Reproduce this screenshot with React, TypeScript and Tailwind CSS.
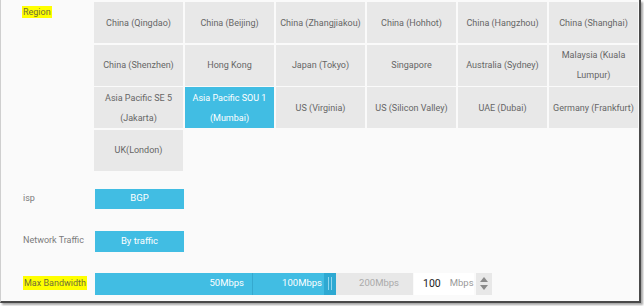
import React from 'react';

const regions = [
  'China (Qingdao)',
  'China (Beijing)',
  'China (Zhangjiakou)',
  'China (Hohhot)',
  'China (Hangzhou)',
  'China (Shanghai)',
  'China (Shenzhen)',
  'Hong Kong',
  'Japan (Tokyo)',
  'Singapore',
  'Australia (Sydney)',
  'Malaysia (Kuala Lumpur)',
  'Asia Pacific SE 5 (Jakarta)',
  'Asia Pacific SOU 1 (Mumbai)',
  'US (Virginia)',
  'US (Silicon Valley)',
  'UAE (Dubai)',
  'Germany (Frankfurt)',
  'UK(London)',
];

const selected = 'Asia Pacific SOU 1 (Mumbai)';

function Label({ children, mark }: { children: React.ReactNode; mark?: boolean }) {
  return (
    <div className="w-[94px] shrink-0 pl-[22px] text-[9px] text-[#7a7a7a] whitespace-nowrap">
      <span className={mark ? 'bg-[#ffff00] px-[1px] py-[2px] text-[#6f6f3a]' : ''}>{children}</span>
    </div>
  );
}

export default function App() {
  return (
    <div className="w-[644px] h-[306px] bg-white" style={{ fontFamily: 'Roboto, "Liberation Sans", sans-serif' }}>
      <div className="w-[641px] h-[303px] bg-[#fafafa] border-l border-[#cfcfcf] border-r-2 border-b-2 border-r-[#4a4a4a] border-b-[#4a4a4a] shadow-[2px_2px_2px_rgba(0,0,0,0.35)] pt-[2px]">
        {/* region */}
        <div className="flex">
          <div className="w-[93px] shrink-0 pl-[21px] pt-[4px] text-[9px] text-[#6f6f3a] leading-[13px]">
            <span className="bg-[#ffff00] px-[1px] py-[1px]">Region</span>
          </div>
          <div className="grid grid-cols-[repeat(6,89px)] auto-rows-[41px] gap-x-[2px] gap-y-[1.5px]">
            {regions.map(r => (
              <div
                key={r}
                className={
                  'flex items-center justify-center text-center px-[1px] text-[9px] leading-[20px] ' +
                  (r === selected ? 'bg-[#41bde3] text-white' : 'bg-[#e8e8e8] text-[#666]')
                }
              >
                {r}
              </div>
            ))}
          </div>
        </div>

        {/* isp */}
        <div className="flex items-center mt-[18px] h-[20px]">
          <Label>isp</Label>
          <div className="w-[89px] h-[20px] bg-[#41bde3] text-white text-[9.5px] flex items-center justify-center">BGP</div>
        </div>

        {/* network traffic */}
        <div className="flex items-center mt-[22px] h-[21px]">
          <Label>Network Traffic</Label>
          <div className="w-[89px] h-[21px] bg-[#41bde3] text-white text-[9.5px] flex items-center justify-center">By traffic</div>
        </div>

        {/* bandwidth */}
        <div className="flex items-center mt-[21px] h-[22px]">
          <Label mark>Max Bandwidth</Label>
          <div className="flex h-[22px] text-[9.5px]">
            <div className="w-[158px] bg-[#41bde3] text-white flex items-center justify-end pr-[8px] border-r border-[#35a9cf]">50Mbps</div>
            <div className="w-[71px] bg-[#41bde3] text-white flex items-center justify-end pr-[2px]">100Mbps</div>
            <div className="w-[12px] bg-[#2ea9d2] flex items-center justify-center gap-[2px]">
              <div className="w-px h-[13px] bg-[#8fd6ee]" />
              <div className="w-px h-[13px] bg-[#8fd6ee]" />
            </div>
            <div className="w-[77px] bg-[#e8e8e8] text-[#aaa] flex items-center justify-end pr-[14px]">200Mbps</div>
            <div className="w-[60px] ml-[1px] bg-white flex items-center">
              <span className="ml-[9px] text-[10.5px] text-[#222]">100</span>
              <span className="ml-[9px] text-[9.5px] text-[#999]">Mbps</span>
            </div>
            <div className="w-[16px] ml-[2px] bg-[#e8e8e8] flex flex-col items-center justify-center gap-[3px]">
              <svg width="8" height="5" viewBox="0 0 8 5"><path d="M0 5 L4 0 L8 5 Z" fill="#8a8a8a" /></svg>
              <svg width="8" height="5" viewBox="0 0 8 5"><path d="M0 0 L4 5 L8 0 Z" fill="#8a8a8a" /></svg>
            </div>
          </div>
        </div>
      </div>
    </div>
  );
}
